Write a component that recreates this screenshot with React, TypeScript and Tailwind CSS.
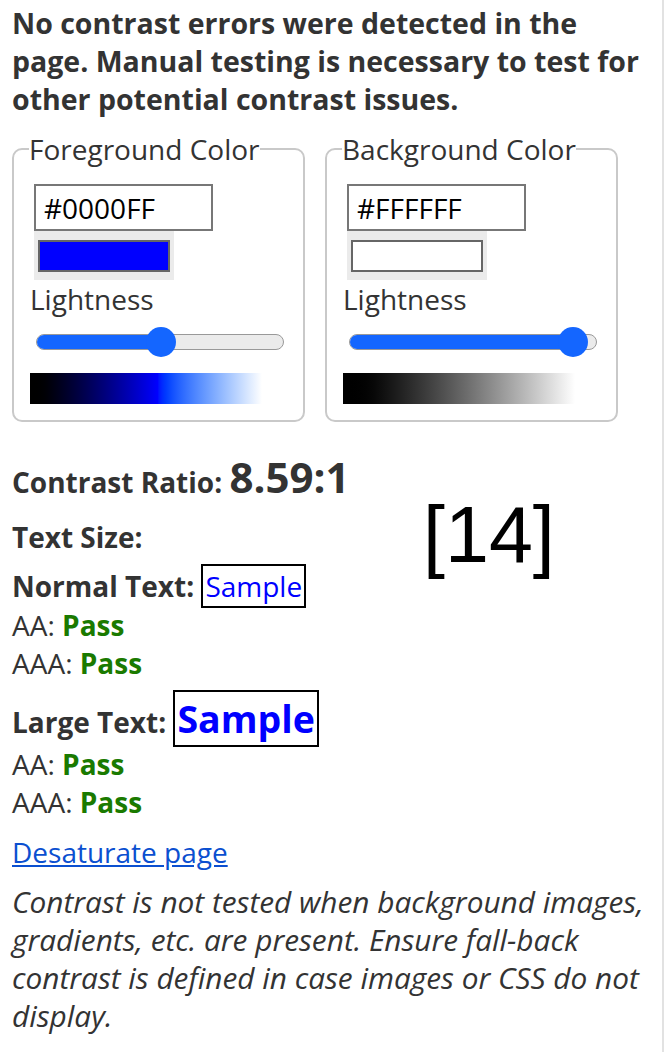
import React from "react";

const font = { fontFamily: '"Open Sans", "Liberation Sans", sans-serif' };

interface ColorBoxProps {
  title: string;
  hex: string;
  swatch: string;
  thumb: number;
  gradient: string;
}

const ColorBox = ({ title, hex, swatch, thumb, gradient }: ColorBoxProps) => (
  <fieldset className="w-[293px] border-2 border-[#c9c9c9] rounded-[10px] px-4 pb-4 min-w-0">
    <legend className="text-[28px] leading-[38px] text-[#333] -ml-px">{title}</legend>
    <div className="mt-[16px] ml-1 w-[179px] h-[47px] border-2 border-[#777] flex items-center px-2 text-[28px] text-black">
      {hex}
    </div>
    <div className="ml-1 w-[140px] h-[49px] bg-[#ebebeb] pl-1 pt-[9px]">
      <div className={`w-[132px] h-[32px] border-2 border-[#666] ${swatch}`} />
    </div>
    <div className="text-[28px] leading-[38px] text-[#333]">Lightness</div>
    <div className="relative ml-[6px] mt-[9px] w-[248px] h-[30px] flex items-center">
      <div className="w-full h-[16px] rounded-full border border-[#999] bg-[#ebebeb] overflow-hidden">
        <div className="h-full bg-[#1466ff] border-r border-[#3a5fb8]" style={{ width: thumb }} />
      </div>
      <div
        className="absolute top-0 w-[30px] h-[30px] rounded-full bg-[#1466ff]"
        style={{ left: thumb - 15 }}
      />
    </div>
    <div className={`mt-[16px] w-[232px] h-[31px] ${gradient}`} />
  </fieldset>
);

const Pass = ({ label }: { label: string }) => (
  <div className="text-[28px] leading-[38px]">
    {label}: <span className="font-bold text-[#1a7a00]">Pass</span>
  </div>
);

export default function App() {
  return (
    <div
      className="w-[664px] min-h-[1052px] bg-white border-r-2 border-[#e2e2e2] text-[#333] px-3 pt-1"
      style={font}
    >
      <p className="text-[28.5px] leading-[38px] font-bold">
        No contrast errors were detected in the page. Manual testing is necessary to test for other
        potential contrast issues.
      </p>

      <div className="mt-[12px] flex gap-5">
        <ColorBox
          title="Foreground Color"
          hex="#0000FF"
          swatch="bg-[#0000ff]"
          thumb={125}
          gradient="bg-linear-to-r from-black via-[#0000ff] via-55% to-white"
        />
        <ColorBox
          title="Background Color"
          hex="#FFFFFF"
          swatch="bg-white"
          thumb={224}
          gradient="bg-linear-to-r from-black to-white"
        />
      </div>

      <div className="flex mt-[34px]">
        <div className="w-[411px]">
          <div className="font-bold text-[28px] leading-[50px]">
            Contrast Ratio: <span className="text-[42px] leading-none">8.59:1</span>
          </div>
          <div className="mt-[11px] font-bold text-[28px] leading-[38px]">Text Size:</div>
          <div className="mt-[8px] h-[42px] text-[28px] leading-[38px]">
            <span className="font-bold">Normal Text: </span>
            <span className="inline-block border-2 border-black px-[2px] leading-[40px] text-[#0000ff]">
              Sample
            </span>
          </div>
        </div>
        <div
          className="mt-[39px] text-[79px] leading-none text-black"
          style={{ fontFamily: '"Liberation Sans", Arial, sans-serif' }}
        >
          [14]
        </div>
      </div>

      <Pass label="AA" />
      <Pass label="AAA" />
      <div className="mt-[8px] h-[55px] text-[28px] leading-[38px]">
        <span className="font-bold">Large Text: </span>
        <span className="inline-block border-2 border-black px-[2px] text-[37.5px] leading-[53px] font-bold text-[#0000ff]">
          Sample
        </span>
      </div>
      <Pass label="AA" />
      <Pass label="AAA" />
      <div className="mt-[12px] text-[28px] leading-[38px]">
        <a href="#" className="text-[#0b4fd0] underline">
          Desaturate page
        </a>
      </div>
      <p className="mt-[12px] text-[29.8px] leading-[38px] italic">
        Contrast is not tested when background images, gradients, etc. are present. Ensure
        fall-back contrast is defined in case images or CSS do not display.
      </p>
    </div>
  );
}
